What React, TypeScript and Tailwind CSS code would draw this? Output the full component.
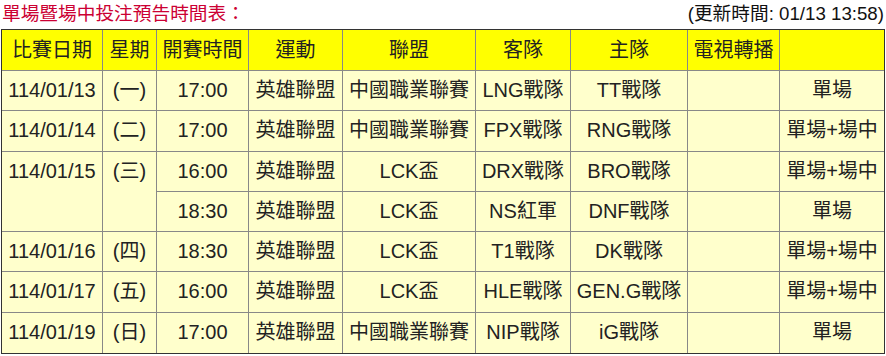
import React from "react";

type Row = {
  date?: string;
  day?: string;
  span?: number;
  time: string;
  sport: string;
  league: string;
  away: string;
  home: string;
  tv: string;
  type: string;
};

const rows: Row[] = [
  { date: "114/01/13", day: "(一)", time: "17:00", sport: "英雄聯盟", league: "中國職業聯賽", away: "LNG戰隊", home: "TT戰隊", tv: "", type: "單場" },
  { date: "114/01/14", day: "(二)", time: "17:00", sport: "英雄聯盟", league: "中國職業聯賽", away: "FPX戰隊", home: "RNG戰隊", tv: "", type: "單場+場中" },
  { date: "114/01/15", day: "(三)", span: 2, time: "16:00", sport: "英雄聯盟", league: "LCK盃", away: "DRX戰隊", home: "BRO戰隊", tv: "", type: "單場+場中" },
  { time: "18:30", sport: "英雄聯盟", league: "LCK盃", away: "NS紅軍", home: "DNF戰隊", tv: "", type: "單場" },
  { date: "114/01/16", day: "(四)", time: "18:30", sport: "英雄聯盟", league: "LCK盃", away: "T1戰隊", home: "DK戰隊", tv: "", type: "單場+場中" },
  { date: "114/01/17", day: "(五)", time: "16:00", sport: "英雄聯盟", league: "LCK盃", away: "HLE戰隊", home: "GEN.G戰隊", tv: "", type: "單場+場中" },
  { date: "114/01/19", day: "(日)", time: "17:00", sport: "英雄聯盟", league: "中國職業聯賽", away: "NIP戰隊", home: "iG戰隊", tv: "", type: "單場" },
];

const headers = ["比賽日期", "星期", "開賽時間", "運動", "聯盟", "客隊", "主隊", "電視轉播", ""];
const widths = [101, 54, 92, 94, 133, 95, 117, 92, 104];

const font = { fontFamily: '"Liberation Sans", Arial, "Noto Sans CJK TC", sans-serif' };

const td =
  "border-r border-b border-[#888888] last:border-r-0 p-0 text-center align-top whitespace-nowrap";

export default function App() {
  return (
    <div className="w-[886px] h-[356px] bg-white text-[#222]" style={font}>
      <div className="flex h-[29px] items-center justify-between pl-[2px] pr-[2px] text-[18.7px] leading-none">
        <span className="text-[#cc0033]">單場暨場中投注預告時間表：</span>
        <span className="text-[#111]">(更新時間: 01/13 13:58)</span>
      </div>
      <div className="ml-[1px] w-[884px] border border-[#333333]">
        <table className="w-full table-fixed border-separate border-spacing-0 text-[20px]">
          <colgroup>
            {widths.map((w, i) => (
              <col key={i} style={{ width: w }} />
            ))}
          </colgroup>
          <thead>
            <tr className="h-[41px] bg-[#ffff00]">
              {headers.map((h, i) => (
                <td key={i} className={td + " leading-[40px]"}>
                  {h}
                </td>
              ))}
            </tr>
          </thead>
          <tbody className="bg-[#ffffcc]">
            {rows.map((r, i) => (
              <tr key={i} className="h-[40.3px] [&:last-child>td]:border-b-0">
                {r.date !== undefined && (
                  <td rowSpan={r.span ?? 1} className={td + " leading-[39px]"}>
                    {r.date}
                  </td>
                )}
                {r.day !== undefined && (
                  <td rowSpan={r.span ?? 1} className={td + " leading-[39px]"}>
                    {r.day}
                  </td>
                )}
                <td className={td + " leading-[39px]"}>{r.time}</td>
                <td className={td + " leading-[39px]"}>{r.sport}</td>
                <td className={td + " leading-[39px]"}>{r.league}</td>
                <td className={td + " leading-[39px]"}>{r.away}</td>
                <td className={td + " leading-[39px]"}>{r.home}</td>
                <td className={td + " leading-[39px]"}>{r.tv}</td>
                <td className={td + " leading-[39px]"}>{r.type}</td>
              </tr>
            ))}
          </tbody>
        </table>
      </div>
    </div>
  );
}
